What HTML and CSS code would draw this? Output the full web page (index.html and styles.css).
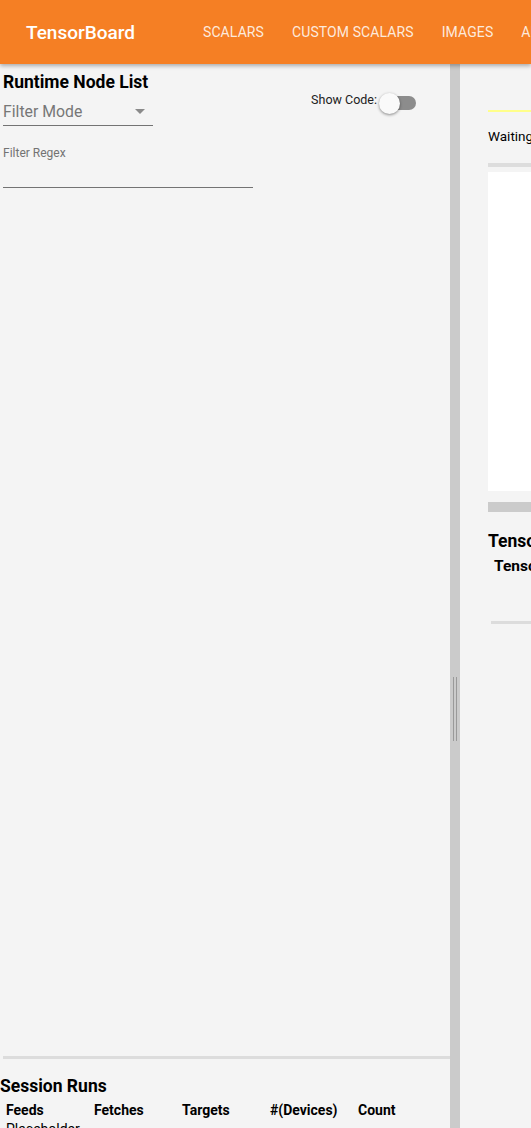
FILE: index.html
```html
<!DOCTYPE html>
<html>
<head>
<meta charset="utf-8">
<link rel="stylesheet" href="styles.css">
</head>
<body>
<header class="toolbar">
  <div class="brand">TensorBoard</div>
  <nav class="tabs">
    <span class="tab">Scalars</span>
    <span class="tab">Custom Scalars</span>
    <span class="tab">Images</span>
    <span class="tab">Audio</span>
  </nav>
</header>
<main class="main">
  <section class="left">
    <div class="left-top">
      <div class="controls">
        <h2 class="title">Runtime Node List</h2>
        <div class="dropdown">
          <span class="dd-label">Filter Mode</span>
          <span class="dd-arrow"></span>
        </div>
        <div class="regex">
          <span class="regex-label">Filter Regex</span>
        </div>
      </div>
      <div class="show-code">
        <span class="sc-label">Show Code:</span>
        <span class="toggle"><span class="track"></span><span class="knob"></span></span>
      </div>
    </div>
    <div class="left-spacer"></div>
    <div class="sessions">
      <h2 class="sess-title">Session Runs</h2>
      <div class="sess-head">
        <span class="col">Feeds</span>
        <span class="col">Fetches</span>
        <span class="col">Targets</span>
        <span class="col">#(Devices)</span>
        <span class="col">Count</span>
      </div>
      <div class="sess-row"><span class="col cell">Placeholder</span></div>
    </div>
  </section>
  <div class="splitter"><span class="grip"></span></div>
  <section class="right">
    <div class="progress"></div>
    <div class="waiting">Waiting for data...</div>
    <div class="bar-light"></div>
    <div class="canvas"></div>
    <div class="bar-dark"></div>
    <h2 class="tensor-title">Tensor Values</h2>
    <h3 class="tensor-sub">Tensor Name</h3>
    <div class="rule"></div>
  </section>
</main>
</body>
</html>
```
FILE: styles.css
```css
html, body {
  margin: 0;
  padding: 0;
  height: 100%;
  overflow: hidden;
}
body {
  font-family: Roboto, "Liberation Sans", sans-serif;
  background: #f5f5f5;
  color: #000;
  display: flex;
  flex-direction: column;
  width: 531px;
  height: 1128px;
}
.toolbar {
  flex: 0 0 64px;
  height: 64px;
  background: #f57f24;
  display: flex;
  align-items: center;
  box-shadow: 0 2px 4px rgba(0,0,0,0.3);
  position: relative;
  z-index: 2;
  white-space: nowrap;
  overflow: hidden;
}
.brand {
  color: #fff;
  font-size: 19px;
  font-weight: 500;
  padding-left: 26px;
  width: 177px;
  flex: 0 0 auto;
  box-sizing: border-box;
}
.tabs {
  display: flex;
}
.tab {
  text-transform: uppercase;
  color: rgba(255,255,255,0.85);
  font-size: 14px;
  padding: 0 14px;
  letter-spacing: 0.1px;
}
.tabs .tab:first-child { padding-left: 26px; }
.main {
  flex: 1;
  display: flex;
  min-height: 0;
}
.left {
  width: 450px;
  flex: 0 0 450px;
  display: flex;
  flex-direction: column;
  background: #f4f4f4;
}
.left-top {
  display: flex;
  justify-content: space-between;
  padding: 0 34px 0 3px;
}
.title {
  font-size: 17.5px;
  font-weight: 700;
  margin: 8px 0 0;
  line-height: 20px;
}
.dropdown {
  width: 150px;
  height: 34px;
  border-bottom: 1px solid #737373;
  display: flex;
  justify-content: space-between;
  align-items: flex-end;
  padding-bottom: 3px;
  box-sizing: border-box;
}
.dd-label {
  font-size: 15.8px;
  line-height: 20px;
  color: #777;
}
.dd-arrow {
  width: 0;
  height: 0;
  border-left: 5px solid transparent;
  border-right: 5px solid transparent;
  border-top: 5px solid #8a8a8a;
  margin: 0 8px 8px 0;
}
.regex {
  width: 250px;
  height: 62px;
  border-bottom: 1px solid #737373;
  box-sizing: border-box;
  padding-top: 20px;
}
.regex-label {
  font-size: 12px;
  line-height: 14px;
  color: #737373;
  display: block;
}
.show-code {
  display: flex;
  align-items: center;
  margin-top: 27px;
  height: 24px;
}
.sc-label {
  font-size: 12.5px;
  line-height: 14px;
  color: #212121;
  margin-bottom: 6px;
}
.toggle {
  position: relative;
  width: 37px;
  height: 20px;
  margin-left: 2px;
  display: inline-block;
}
.track {
  position: absolute;
  left: 9px;
  top: 3px;
  width: 28px;
  height: 14px;
  border-radius: 7px;
  background: #8c8c8c;
}
.knob {
  position: absolute;
  left: 0;
  top: 0;
  width: 21px;
  height: 21px;
  border-radius: 50%;
  background: #fafafa;
  box-shadow: 0 1px 3px rgba(0,0,0,0.45);
}
.left-spacer {
  flex: 1;
}
.sessions {
  border-top: 3px solid #dcdcdc;
  margin-left: 3px;
  height: 72px;
  box-sizing: border-box;
}
.sess-title {
  font-size: 17.5px;
  font-weight: 700;
  margin: 16px 0 0 -3px;
  line-height: 22px;
}
.sess-head, .sess-row {
  display: flex;
  padding-left: 3px;
}
.sess-head {
  margin-top: 4px;
}
.sess-row {
  margin-top: 1px;
}
.col {
  width: 88px;
  font-size: 14px;
  font-weight: 700;
  line-height: 18px;
}
.cell {
  font-weight: 400;
}
.splitter {
  width: 10px;
  flex: 0 0 10px;
  background: #cbcbcb;
  display: flex;
  align-items: flex-start;
  justify-content: center;
  padding-top: 613px;
  box-sizing: border-box;
}
.grip {
  width: 2px;
  height: 64px;
  border-left: 1px solid #9a9a9a;
  border-right: 1px solid #9a9a9a;
}
.right {
  flex: 1;
  padding-left: 28px;
  overflow: hidden;
  white-space: nowrap;
  background: #f4f4f4;
}
.progress {
  height: 2px;
  background: #ffff8a;
  margin-top: 46px;
  width: 600px;
}
.waiting {
  font-size: 13.5px;
  margin-top: 16px;
  line-height: 16px;
}
.bar-light {
  height: 4px;
  background: #dddddd;
  margin-top: 19px;
  width: 600px;
}
.canvas {
  height: 319px;
  background: #fff;
  margin-top: 5px;
  width: 600px;
}
.bar-dark {
  height: 10px;
  background: #cbcbcb;
  margin-top: 11px;
  width: 600px;
}
.tensor-title {
  font-size: 17.5px;
  font-weight: 700;
  margin: 19px 0 0;
  line-height: 20px;
}
.tensor-sub {
  font-size: 15.5px;
  font-weight: 700;
  margin: 5px 0 0 6px;
  line-height: 20px;
}
.rule {
  height: 3px;
  background: #dcdcdc;
  margin: 45px 0 0 3px;
  width: 600px;
}
```
